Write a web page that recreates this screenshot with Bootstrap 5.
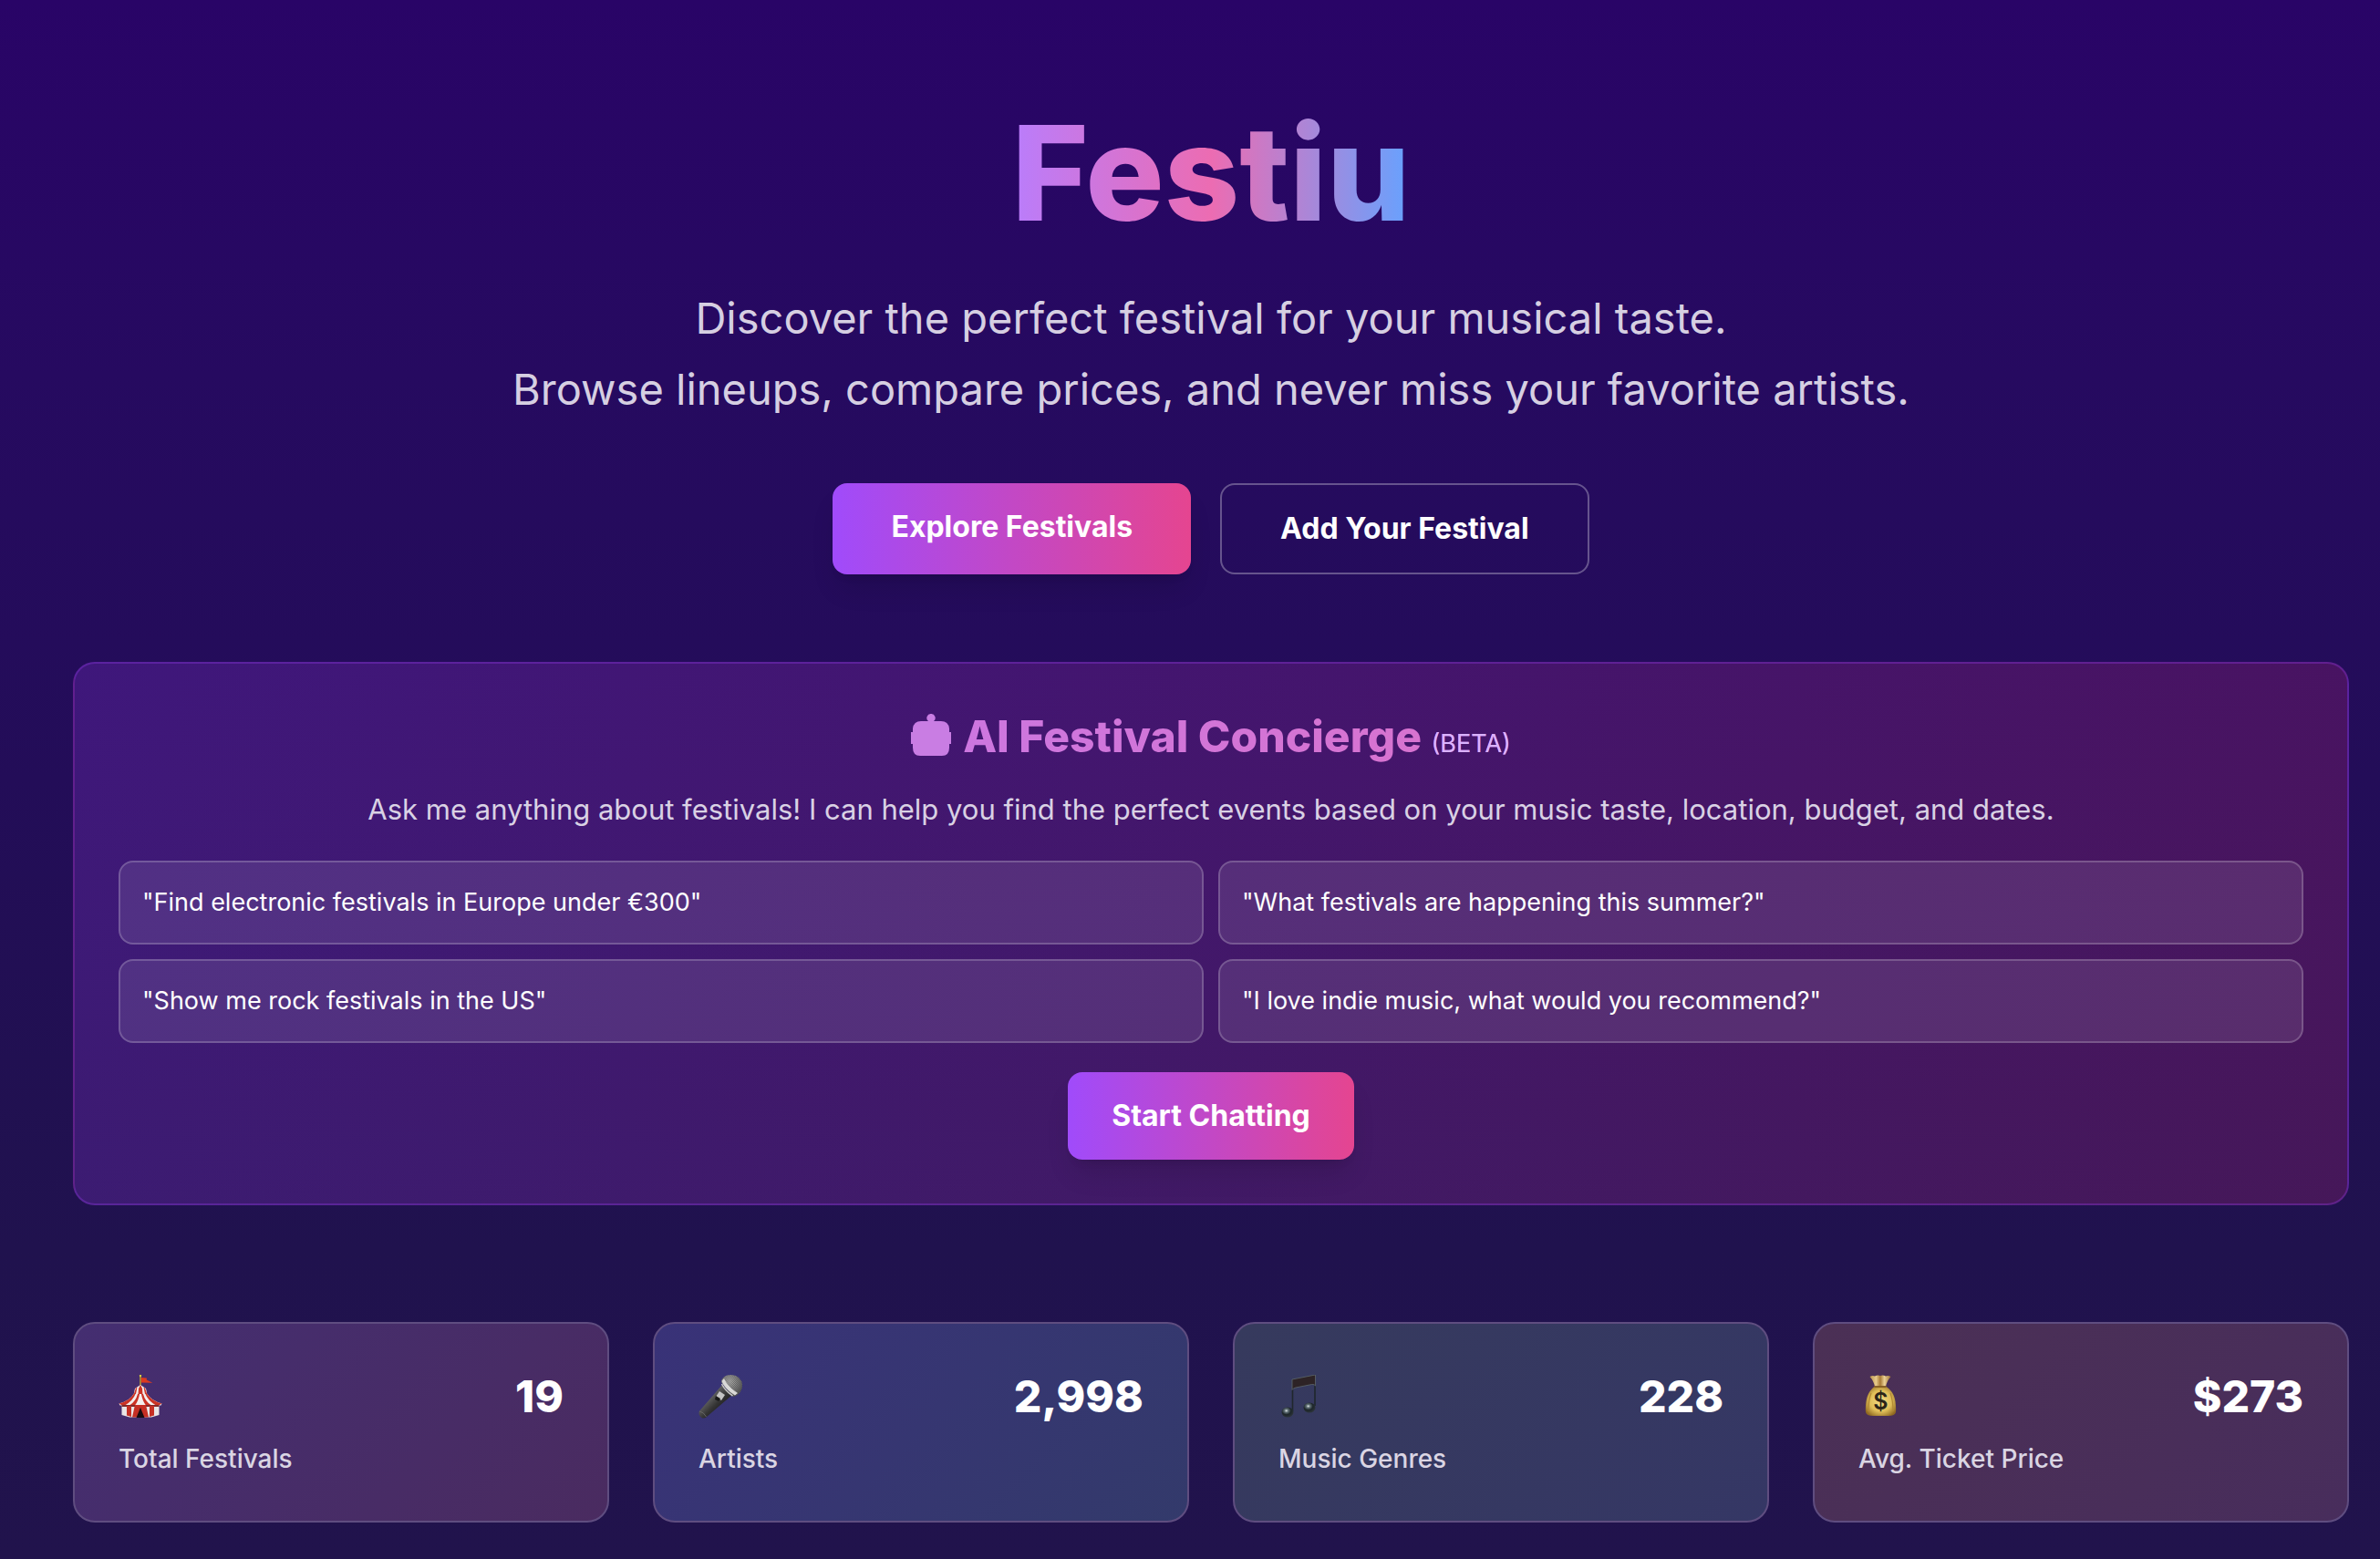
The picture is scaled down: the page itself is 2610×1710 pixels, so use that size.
<!DOCTYPE html>
<html lang="en">
<head>
<meta charset="utf-8">
<meta name="viewport" content="width=device-width, initial-scale=1">
<title>Festiu</title>
<link href="https://cdn.jsdelivr.net/npm/bootstrap@5.3.0/dist/css/bootstrap.min.css" rel="stylesheet">
<style>
  body { font-family: Inter, "Liberation Sans", sans-serif; color: #fff; background: #21134c; }
  .page { min-height: 100vh; padding: 118px 34px 40px 80px; background: linear-gradient(180deg, #290467 0%, #260a60 24%, #230d58 50%, #20124e 80%, #21134c 100%); }
  .brand-title { font-size: 144px; line-height: 144px; font-weight: 800; margin-bottom: 48px; background: linear-gradient(90deg, #b97dfc, #ec6cb2 50%, #66a2ff); -webkit-background-clip: text; background-clip: text; color: transparent; }
  .tagline { font-size: 47px; line-height: 78px; color: #d6cfe2; margin-bottom: 64px; }
  .hero { margin-bottom: 96px; }
  .hero-actions { gap: 32px; }
  .cta { --bs-btn-color: #fff; --bs-btn-hover-color: #fff; --bs-btn-active-color: #fff; --bs-btn-border-width: 0; --bs-btn-border-radius: 16px; font-size: 32px; line-height: 48px; font-weight: 700; padding: 24px 64px; }
  .cta-fill { background: linear-gradient(90deg, #a04bfb, #e54590); box-shadow: 0 20px 30px -6px rgba(0,0,0,.12), 0 8px 12px -8px rgba(0,0,0,.12); }
  .cta-line { --bs-btn-border-width: 2px; --bs-btn-border-color: rgba(255,255,255,.3); }
  .concierge { border: 2px solid rgba(153,60,240,.32); border-radius: 24px; padding: 48px; margin-bottom: 128px; background: linear-gradient(90deg, rgba(173,70,255,.2), rgba(222,50,130,.2)); }
  .concierge h2 { font-size: 48px; line-height: 64px; font-weight: 800; margin-bottom: 24px; background: linear-gradient(90deg, #b97dfc, #ec6cb2); -webkit-background-clip: text; background-clip: text; color: transparent; }
  .concierge h2 svg { width: 44px; height: 46px; margin-right: 13px; vertical-align: -4px; }
  .beta-tag { font-size: 27px; line-height: 28px; font-weight: 400; color: #dab2ff; }
  .concierge-intro { font-size: 31px; line-height: 48px; color: #d9d1e4; margin-bottom: 32px; }
  .prompts { --bs-gutter-x: 16px; --bs-gutter-y: 16px; margin-bottom: 32px; }
  .prompt { width: 100%; text-align: left; color: #fff; font-size: 27px; line-height: 40px; padding: 24px; border: 2px solid rgba(255,255,255,.2); border-radius: 16px; background: rgba(255,255,255,.1); }
  .start { padding: 24px 48px; }
  .stats { --bs-gutter-x: 48px; --bs-gutter-y: 48px; }
  .stat { border: 2px solid #5f4d80; border-radius: 24px; padding: 48px; }
  .stat svg { width: 48px; height: 48px; }
  .stat-value { font-size: 48px; line-height: 64px; font-weight: 800; }
  .stat-label { font-size: 28px; line-height: 40px; font-weight: 500; color: #dad5e3; margin-top: 16px; }
  .tone-purple { background: linear-gradient(135deg, #442e71, #4a2b60); }
  .tone-blue { background: linear-gradient(135deg, #393278, #333a6b); }
  .tone-green { background: linear-gradient(135deg, #363a5d, #353765); }
  .tone-gold { background: linear-gradient(135deg, #4b3055, #482d5c); }
</style>
</head>
<body>
<main class="page">
  <header class="hero d-flex flex-column align-items-center text-center">
    <h1 class="brand-title">Festiu</h1>
    <p class="tagline">Discover the perfect festival for your musical taste.<br>Browse lineups, compare prices, and never miss your favorite artists.</p>
    <div class="hero-actions d-flex flex-wrap justify-content-center">
      <a class="btn cta cta-fill" href="#stats">Explore Festivals</a>
      <a class="btn cta cta-line" href="#concierge">Add Your Festival</a>
    </div>
  </header>

  <section class="concierge text-center" id="concierge">
    <h2><svg viewBox="0 0 44 46" aria-hidden="true"><path fill="#c97de3" d="M22 0a4.500 4.500 0 0 1 3 8h8q8 0 9 8v4h2v13h-2v4q0 9-8 9H10q-8 0-8-9v-4H0V20h2v-4q1-8 9-8h8a4.500 4.500 0 0 1 3-8z"/></svg>AI Festival Concierge <span class="beta-tag">(BETA)</span></h2>
    <p class="concierge-intro">Ask me anything about festivals! I can help you find the perfect events based on your music taste, location, budget, and dates.</p>
    <div class="row prompts">
      <div class="col-md-6"><button type="button" class="prompt">"Find electronic festivals in Europe under €300"</button></div>
      <div class="col-md-6"><button type="button" class="prompt">"What festivals are happening this summer?"</button></div>
      <div class="col-md-6"><button type="button" class="prompt">"Show me rock festivals in the US"</button></div>
      <div class="col-md-6"><button type="button" class="prompt">"I love indie music, what would you recommend?"</button></div>
    </div>
    <button type="button" class="btn cta cta-fill start">Start Chatting</button>
  </section>

  <section class="row stats" id="stats">
    <div class="col-sm-6 col-lg-3">
      <div class="stat tone-purple">
        <div class="d-flex justify-content-between align-items-center">
          <svg viewBox="0 0 48 48" aria-hidden="true">
            <path d="M24 .5V13" stroke="#b59a35" stroke-width="1.600"/><circle cx="24" cy="1" r="1.200" fill="#d9cf3f"/>
            <path d="M24.800 3l6 .6v2l6.500 3.200-12.500-.3z" fill="#dd3a20"/>
            <path d="M24 11l-6 4-1.500 7h15L30 15z" fill="#f3efee"/>
            <path d="M24 11l-2 4-.5 7h5l-.5-7zM19 14.500l-2.500 7.500h2.300l1.700-8.500zM29 14.500l2.500 7.500h-2.300l-1.700-8.500z" fill="#cc3527"/>
            <path d="M16.500 21h15q4 7 16 10.500l-1 2H1.500l-1-2Q13 28 16.500 21z" fill="#f3efee"/>
            <path d="M16.500 21Q13 28 .5 31.500L4 33.500h3Q16 28 18.500 21zM21 21q-2 8-9 12.500h6Q22 28 23 21zM25 21q1 7 5 12.500h6Q29 29 27 21zM29.500 21Q32 28 41 33.500h3l3.500-2Q35 28 31.500 21z" fill="#cb3325"/>
            <path d="M3.500 33h41v11L36 46.500H12L3.500 44z" fill="#e9e5e5"/>
            <path d="M3.500 33h41v2h-41z" fill="#7f2a2b"/>
            <path d="M9 34h5v12l-5-1.500zM34 34h5v10.500L34 46zM18 33h12l3 13.500h-6L24 38l-3 8.500h-6z" fill="#c52f24"/>
            <path d="M24 36l4.500 11h-9z" fill="#160c10"/>
          </svg>
          <div class="stat-value">19</div>
        </div>
        <div class="stat-label">Total Festivals</div>
      </div>
    </div>
    <div class="col-sm-6 col-lg-3">
      <div class="stat tone-blue">
        <div class="d-flex justify-content-between align-items-center">
          <svg viewBox="0 0 48 48" aria-hidden="true">
            <defs>
              <linearGradient id="micBody" x1="0" y1="0" x2="1" y2="1"><stop offset=".3" stop-color="#6c6c6c"/><stop offset=".55" stop-color="#333"/><stop offset=".8" stop-color="#151515"/></linearGradient>
              <radialGradient id="micHead" cx=".4" cy=".3" r=".8"><stop offset="0" stop-color="#b5b5b3"/><stop offset=".6" stop-color="#777"/><stop offset="1" stop-color="#444"/></radialGradient>
              <pattern id="mesh" width="2" height="2" patternUnits="userSpaceOnUse"><path d="M0 0h1v1H0zM1 1h1v1H1z" fill="#333" opacity=".45"/></pattern>
            </defs>
            <path d="M26 11L.8 40Q-.5 45 4 47.500q3 .5 5-1.500L37 22z" fill="url(#micBody)"/>
            <path d="M1 40q5 1 7.500 6" stroke="#666" fill="none"/>
            <path d="M25 8q1-8 11-8 11 1 12 11 0 10-10 13z" fill="url(#micHead)"/>
            <path d="M25 8q1-8 11-8 11 1 12 11 0 10-10 13z" fill="url(#mesh)"/>
            <path d="M28 4q4 9 15 16l-3 2.500Q29 16 25.500 7z" fill="#d9d9d7"/>
            <path d="M25.500 10q4 8 12 13" stroke="#c7c7c5" stroke-width="1.500" fill="none"/>
            <path d="M23 18l6 4-4 6-6-4z" fill="#c4c4c4"/><path d="M19 23l5 3-2 3-4-2z" fill="#181818"/>
          </svg>
          <div class="stat-value">2,998</div>
        </div>
        <div class="stat-label">Artists</div>
      </div>
    </div>
    <div class="col-sm-6 col-lg-3">
      <div class="stat tone-green">
        <div class="d-flex justify-content-between align-items-center">
          <svg viewBox="0 0 48 48" aria-hidden="true">
            <defs><radialGradient id="noteHead" cx=".4" cy=".35" r=".65"><stop offset="0" stop-color="#dfe6e6"/><stop offset=".25" stop-color="#607076"/><stop offset=".6" stop-color="#1c2529"/><stop offset="1" stop-color="#2c3439"/></radialGradient></defs>
            <path d="M15.500 15V40M40 10V34" stroke="#20272c" stroke-width="1.600"/>
            <path d="M15 5L40.500 0v12q-1-2-4-1.500L19 14q-3 .6-4 2.500z" fill="#2d2326" stroke="#5d676c" stroke-width=".8"/>
            <ellipse cx="10" cy="41" rx="6.500" ry="5.500" fill="url(#noteHead)"/>
            <ellipse cx="34" cy="36" rx="6.500" ry="5.500" fill="url(#noteHead)"/>
          </svg>
          <div class="stat-value">228</div>
        </div>
        <div class="stat-label">Music Genres</div>
      </div>
    </div>
    <div class="col-sm-6 col-lg-3">
      <div class="stat tone-gold">
        <div class="d-flex justify-content-between align-items-center">
          <svg viewBox="0 0 48 48" aria-hidden="true">
            <defs><radialGradient id="bag" cx=".5" cy=".5" r=".6"><stop offset="0" stop-color="#f4dc84"/><stop offset=".6" stop-color="#dfbd58"/><stop offset="1" stop-color="#8f6820"/></radialGradient>
            <linearGradient id="neck"><stop offset="0" stop-color="#b9914a"/><stop offset=".3" stop-color="#e8cb8b"/><stop offset=".5" stop-color="#a87a35"/><stop offset=".7" stop-color="#ecd195"/><stop offset="1" stop-color="#9c7132"/></linearGradient></defs>
            <path d="M12.500 2q3-1.500 5.500-.5 3-1.500 6-.5 3-1 6 .5 3-1 5.500.5-4.500 5-5.500 11H18q-1-6-5.500-11z" fill="url(#neck)"/>
            <path d="M18 12.500h12q9 6 10.500 16.500 1 7 .5 12-1 4-8 4H16q-7 0-8-4-.5-5 .5-12Q10 18.500 18 12.500z" fill="url(#bag)"/>
            <path d="M17.500 13h13" stroke="#7c5420" stroke-width="1.600"/>
            <path d="M14 20q-3 8-3 20M35 20q3 8 3 20" stroke="#b38a34" stroke-width="1.200" fill="none"/>
            <text x="24.500" y="38" text-anchor="middle" font-family="Inter, sans-serif" font-size="25" font-weight="600" fill="#2b2418">$</text>
          </svg>
          <div class="stat-value">$273</div>
        </div>
        <div class="stat-label">Avg. Ticket Price</div>
      </div>
    </div>
  </section>
</main>
<script src="https://cdn.jsdelivr.net/npm/bootstrap@5.3.0/dist/js/bootstrap.bundle.min.js"></script>
</body>
</html>
